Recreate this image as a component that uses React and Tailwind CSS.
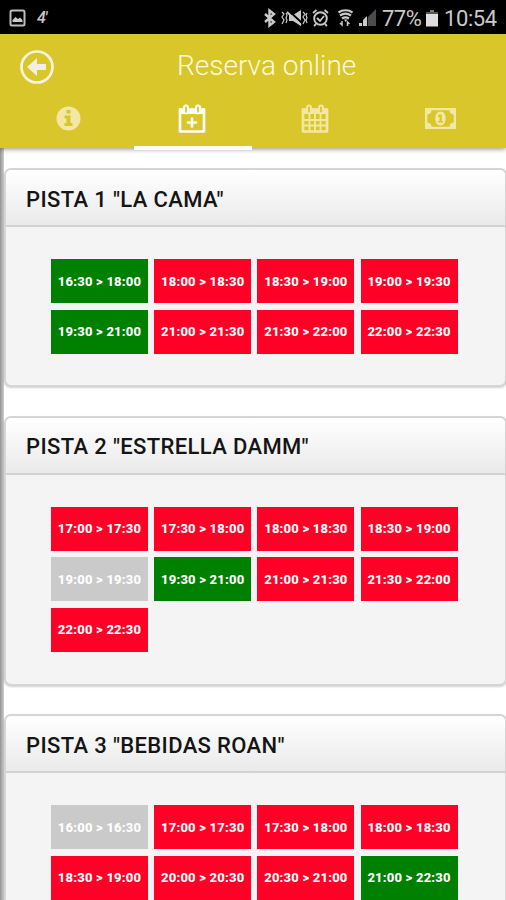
import React from 'react';

const COURTS = [
  {
    name: 'PISTA 1 "LA CAMA"',
    height: 'h-[219px]',
    slots: [
      ['16:30 > 18:00', 'free'], ['18:00 > 18:30', 'busy'], ['18:30 > 19:00', 'busy'], ['19:00 > 19:30', 'busy'],
      ['19:30 > 21:00', 'free'], ['21:00 > 21:30', 'busy'], ['21:30 > 22:00', 'busy'], ['22:00 > 22:30', 'busy'],
    ],
  },
  {
    name: 'PISTA 2 "ESTRELLA DAMM"',
    height: 'h-[270px]',
    slots: [
      ['17:00 > 17:30', 'busy'], ['17:30 > 18:00', 'busy'], ['18:00 > 18:30', 'busy'], ['18:30 > 19:00', 'busy'],
      ['19:00 > 19:30', 'past'], ['19:30 > 21:00', 'free'], ['21:00 > 21:30', 'busy'], ['21:30 > 22:00', 'busy'],
      ['22:00 > 22:30', 'busy'],
    ],
  },
  {
    name: 'PISTA 3 "BEBIDAS ROAN"',
    height: 'h-[270px]',
    slots: [
      ['16:00 > 16:30', 'past'], ['17:00 > 17:30', 'busy'], ['17:30 > 18:00', 'busy'], ['18:00 > 18:30', 'busy'],
      ['18:30 > 19:00', 'busy'], ['20:00 > 20:30', 'busy'], ['20:30 > 21:00', 'busy'], ['21:00 > 22:30', 'free'],
    ],
  },
];

const SLOT_COLORS = { free: 'bg-[#008000]', busy: 'bg-[#ff0026]', past: 'bg-[#cacaca]' };

function StatusBar() {
  return (
    <div className="flex h-[34px] shrink-0 items-center bg-black pt-1 pl-[9px] pr-[9px] text-[#c9c9c9]">
      <svg className="mt-[-2px] shrink-0" width="17" height="18" viewBox="0 0 17 18">
        <rect x="1.5" y="1.5" width="14" height="15" rx="1.5" fill="none" stroke="#bdbdbd" strokeWidth="2" />
        <path d="M3.5 13V11l3-3 2.5 2 2-1.5 2.500 2.500v2z" fill="#c9c9c9" />
      </svg>
      <span className="ml-[11px] mt-[-3px] w-[14px] text-[16px] leading-none font-medium italic tracking-[-1px]">4'</span>
      <svg className="ml-auto mt-[-2px] shrink-0" width="116" height="20" viewBox="0 0 116 20" fill="none" stroke="#c9c9c9">
        <path d="M4 6l9 8-4.500 3.500V2.500l4.500 3.500-9 8" strokeWidth="2.400" />
        <path d="M21 4l2 2-2 3 2 3-2 4M25 5l1 2-1 3 1 2-1 3M42 4l2 2-2 3 2 3-2 4M46 5l-1 2 1 3-1 2 1 3" strokeWidth="1.200" />
        <path d="M28 7h4l8-5v16l-8-5h-4z" fill="#c9c9c9" stroke="none" />
        <path d="M27 2l14 13" stroke="#000" strokeWidth="2" />
        <path d="M26 4l14 13" strokeWidth="1.800" />
        <circle cx="59.500" cy="10.500" r="6.300" strokeWidth="1.900" />
        <path d="M52 5l3.500-3M67 5l-3.500-3M56 10l3 3 4-5M55 16l-2 2M64 16l2 2" strokeWidth="1.800" />
        <path d="M77.500 4.500c4-3 10-3 14 0M79 7.500c3.500-2.300 7.500-2.300 11 0M81 10.500c2.200-1.500 4.800-1.500 7 0" strokeWidth="2.200" />
        <path d="M83 11.500h3.500L84.500 14z" fill="#c9c9c9" stroke="none" />
        <path d="M81 13v4l-2-2M86.500 18v-4l2 2" strokeWidth="1.500" />
        <path d="M98 18L115 1v17z" fill="#4b4b4b" stroke="none" />
        <path d="M98 18v-3h3v3zM102 18v-6l4-4v10z" fill="#c9c9c9" stroke="none" />
        <path d="M101.500 12v6M106.500 7v11" stroke="#000" strokeWidth=".8" />
      </svg>
      <span className="ml-[5px] mt-[-1px] w-[42px] text-[22px] leading-none whitespace-nowrap tracking-[-0.5px]">77%</span>
      <svg className="ml-[2px] mt-[-2px] shrink-0" width="12" height="18" viewBox="0 0 12 18">
        <path d="M4 1h4v2H4z" fill="#777" />
        <path d="M0 3h12v3H0z" fill="#555" />
        <path d="M0 5h12v12.500H0z" fill="#dedede" />
      </svg>
      <span className="ml-[6px] mt-[-1px] w-[53px] text-[22px] leading-none whitespace-nowrap tracking-[-0.4px]">10:54</span>
    </div>
  );
}

function CalendarFrame({ children }) {
  return (
    <svg width="28" height="30" viewBox="0 0 28 30" fill="none" stroke="currentColor">
      <path d="M2 5.500h24v22H2z" strokeWidth="2.700" strokeLinejoin="round" />
      <path d="M1 4.500h26v5.500H1z" fill="currentColor" stroke="none" />
      <path d="M8 3.500v4M20 3.500v4" stroke="currentColor" strokeWidth="6" strokeLinecap="round" />
      <path d="M8 3.500v4M20 3.500v4" stroke="#d9c62a" strokeWidth="1.800" strokeLinecap="round" />
      {children}
    </svg>
  );
}

function Header() {
  return (
    <header className="relative z-10 flex h-[114px] shrink-0 flex-col bg-[#d9c62a] shadow-[0_1px_5px_rgba(0,0,0,0.45)]">
      <div className="grid h-[62px] grid-cols-[60px_1fr_34px] items-center">
        <svg className="ml-[19px] mt-[4px]" width="36" height="36" viewBox="0 0 36 36">
          <circle cx="18" cy="18" r="15.500" fill="none" stroke="#f7f1df" strokeWidth="2.700" />
          <path d="M8 18l10-9v6h9v6h-9v6z" fill="#f2eee6" />
        </svg>
        <h1 className="mt-[2px] w-[190px] justify-self-center pl-[6px] text-[28px] leading-none font-light whitespace-nowrap text-[#fff9dc]">Reserva online</h1>
      </div>
      <nav className="grid h-[52px] shrink-0 grid-cols-[134px_118px_126px_128px] text-[#f2e7a5]">
        <div className="pt-[10px] pl-[56px]">
          <svg width="25" height="25" viewBox="0 0 25 25">
            <circle cx="12.500" cy="12.500" r="12" fill="currentColor" />
            <path d="M10.500 4h4v3.500h-4zM8.500 9.500h6v7.500h2v3h-8v-3h2v-4.500h-2z" fill="#d9c62a" />
          </svg>
        </div>
        <div className="h-[54px] border-b-[4px] border-white pt-[8px] pl-[44px] text-white">
          <CalendarFrame><path d="M14 13.500v10M9 18.500h10" strokeWidth="2.600" /></CalendarFrame>
        </div>
        <div className="pt-[8px] pl-[49px]">
          <CalendarFrame><path d="M8.500 10v17M14 10v17M19.500 10v17M2 16h24M2 21.500h24" strokeWidth="1.900" /></CalendarFrame>
        </div>
        <div className="pt-[12px] pl-[47px]">
          <svg width="31" height="21" viewBox="0 0 31 21" fill="currentColor">
            <path fillRule="evenodd" d="M0 0h31v21H0zM6.500 2.300Q6.500 6 2.300 6.500v8Q6.500 15 6.500 18.700h18Q24.500 15 28.700 14.500v-8Q24.500 6 24.500 2.300z" />
            <path fillRule="evenodd" d="M15.500 3.500c-7 0-7 14 0 14s7-14 0-14zM14.500 6.500h2.200V13h1.300v1.500h-5V13h1.500V9H13V7.500z" />
          </svg>
        </div>
      </nav>
    </header>
  );
}

function Court({ court }) {
  return (
    <section className={`w-[503px] shrink-0 overflow-hidden rounded-[7px] border-2 border-[#d5d5d5] bg-[#f4f4f4] shadow-[0_1px_2px_rgba(0,0,0,0.18)] ${court.height}`}>
      <h2 className="flex h-[57px] items-center border-b-2 border-[#d2d2d2] bg-linear-to-b from-white to-[#eaeaea] pt-[3px] pl-[20px] text-[22px] font-medium tracking-[0.36px] whitespace-nowrap text-[#151515]">
        {court.name}
      </h2>
      <div className="grid grid-cols-[repeat(4,97px)] gap-x-[6.2px] gap-y-[6.5px] pt-[32px] pl-[45px]">
        {court.slots.map(([label, state]) => (
          <div key={label} className={`flex h-[44px] items-center justify-center text-[13px] leading-none font-extrabold tracking-[0.2px] whitespace-nowrap text-white ${SLOT_COLORS[state]}`}>
            {label}
          </div>
        ))}
      </div>
    </section>
  );
}

export default function App() {
  return (
    <div className="flex h-[900px] w-[506px] flex-col overflow-hidden bg-white font-['Roboto','Liberation_Sans',sans-serif]">
      <StatusBar />
      <Header />
      <main className="flex min-h-0 flex-1 overflow-hidden">
        <div className="w-1 shrink-0 bg-linear-to-r from-[#929292] to-[#d0d0d0]" />
        <div className="flex shrink-0 flex-col gap-[28.5px] pt-[20px]">
          {COURTS.map((court) => <Court key={court.name} court={court} />)}
        </div>
      </main>
    </div>
  );
}
